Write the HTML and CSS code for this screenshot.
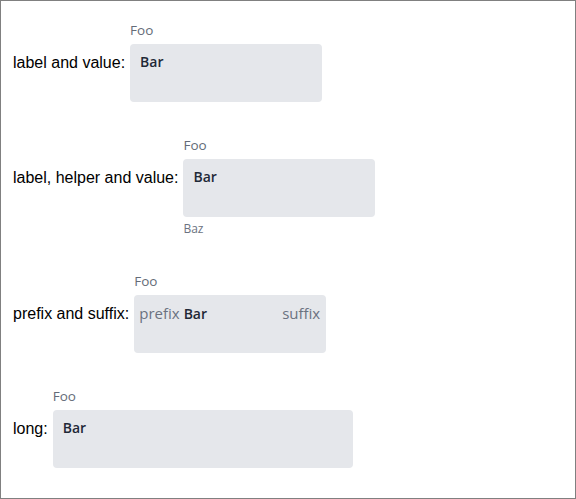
FILE: index.html
```html
<!DOCTYPE html>
<html lang="en">
<head>
    <meta charset="UTF-8">
    <title>Readonly fields</title>
    <link rel="stylesheet" href="styles.css">
</head>
<body>
    <div class="page">
        <!-- label and value -->
        <div class="row">
            <span class="row-label">label and value:</span>
            <div class="field">
                <div class="field-label">Foo</div>
                <div class="field-box">
                    <span class="field-value">Bar</span>
                </div>
            </div>
        </div>

        <!-- label, helper and value -->
        <div class="row">
            <span class="row-label">label, helper and value:</span>
            <div class="field">
                <div class="field-label">Foo</div>
                <div class="field-box">
                    <span class="field-value">Bar</span>
                </div>
                <div class="field-helper">Baz</div>
            </div>
        </div>

        <!-- prefix and suffix -->
        <div class="row">
            <span class="row-label">prefix and suffix:</span>
            <div class="field">
                <div class="field-label">Foo</div>
                <div class="field-box">
                    <span class="field-prefix">prefix</span>
                    <span class="field-value">Bar</span>
                    <span class="field-suffix">suffix</span>
                </div>
            </div>
        </div>

        <!-- long -->
        <div class="row">
            <span class="row-label">long:</span>
            <div class="field field-long">
                <div class="field-label">Foo</div>
                <div class="field-box">
                    <span class="field-value">Bar</span>
                </div>
            </div>
        </div>
    </div>
</body>
</html>
```

FILE: styles.css
```css
/* Page de base */
body {
    margin: 0;
    padding: 0;
    background-color: #ffffff;
    font-family: 'Liberation Sans', Arial, sans-serif;
}

.page {
    height: 499px;
    box-sizing: border-box;
    border: 1px solid #808080;
    padding: 19px 12px 0 12px;
}

/* Une ligne : libellé + champ */
.row {
    display: flex;
    align-items: flex-start;
    gap: 5px;
    margin-bottom: 33px;
}

.row-label {
    font-size: 16px;
    color: #000000;
    line-height: 18px;
    margin-top: 34px;
}

/* Champ en lecture seule */
.field {
    display: flex;
    flex-direction: column;
    width: 192px;
    font-family: 'Open Sans', sans-serif;
}

.field-long {
    width: 300px;
}

.field-label {
    font-size: 13.5px;
    line-height: 20px;
    color: #646b78;
    margin-bottom: 4px;
}

.field-box {
    display: flex;
    align-items: baseline;
    gap: 4px;
    height: 58px;
    box-sizing: border-box;
    padding: 8px 6px 0 10px;
    background-color: #e5e7eb;
    border-radius: 4px;
    font-size: 14px;
    line-height: 20px;
}

.field-value {
    font-weight: 600;
    color: #1f2937;
}

.field-prefix,
.field-suffix {
    font-size: 15px;
    color: #6b7280;
}

.field-prefix {
    margin-left: -5px;
}

.field-suffix {
    margin-left: auto;
}

.field-helper {
    font-size: 12px;
    line-height: 18px;
    color: #6b7280;
    margin-top: 3px;
}
```
